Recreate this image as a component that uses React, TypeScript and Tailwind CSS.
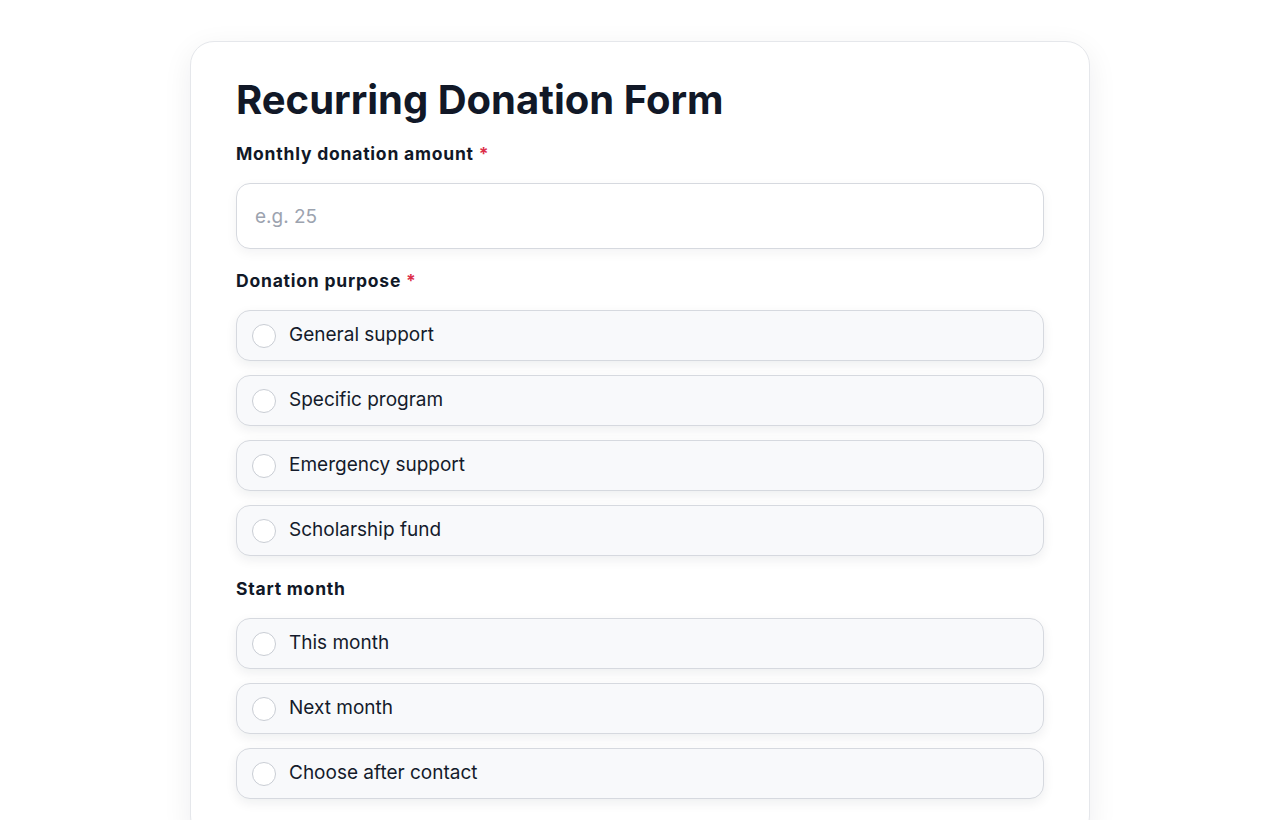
import React, { useState } from 'react';

const purposes = ['General support', 'Specific program', 'Emergency support', 'Scholarship fund'];
const months = ['This month', 'Next month', 'Choose after contact'];

interface OptionListProps {
    name: string;
    options: string[];
    value: string;
    onChange: (v: string) => void;
}

const OptionList: React.FC<OptionListProps> = ({ name, options, value, onChange }) => {
    return (
        <div className="flex flex-col gap-[14px]">
            {options.map((opt) => (
                <label
                    key={opt}
                    className="flex h-[51px] cursor-pointer items-center gap-[13px] rounded-[14px] border border-[#d6d9df] bg-[#f8f9fb] pl-[15px] shadow-[0_4px_12px_rgba(17,24,39,0.07)]"
                >
                    <input
                        type="radio"
                        name={name}
                        checked={value === opt}
                        onChange={() => onChange(opt)}
                        className="sr-only"
                    />
                    <span className="flex h-[24px] w-[24px] shrink-0 items-center justify-center rounded-full border border-[#c9cdd4] bg-white">
                        {value === opt && <span className="h-[12px] w-[12px] rounded-full bg-[#111827]" />}
                    </span>
                    <span className="text-[19px] text-[#141b2b]">{opt}</span>
                </label>
            ))}
        </div>
    );
};

const App: React.FC = () => {
    const [amount, setAmount] = useState('');
    const [purpose, setPurpose] = useState('');
    const [month, setMonth] = useState('');

    const labelClass = 'mb-[17px] text-[17.5px] font-bold leading-[24px] tracking-[0.045em] text-[#111827]';

    return (
        <div className="min-h-screen bg-white pt-[41px] font-['Inter',sans-serif] antialiased">
            <div className="mx-auto w-[900px] rounded-[24px] border border-[#e5e7eb] bg-white px-[45px] pt-[34px] pb-[40px] shadow-[0_8px_30px_rgba(17,24,39,0.07)]">
                <h1 className="mb-[18px] text-[40px] font-bold leading-[48px] text-[#111827]">
                    Recurring Donation Form
                </h1>

                <div className="mb-[20px]">
                    <p className={labelClass}>
                        Monthly donation amount <span className="text-[#dc2f4a]">*</span>
                    </p>
                    <input
                        type="text"
                        value={amount}
                        onChange={(e) => setAmount(e.target.value)}
                        placeholder="e.g. 25"
                        className="block h-[66px] w-full rounded-[14px] border border-[#d6d9df] bg-white px-[18px] text-[19px] text-[#111827] placeholder:text-[#9ca3af] shadow-[0_4px_12px_rgba(17,24,39,0.05)] focus:outline-none"
                    />
                </div>

                <div className="mb-[21px]">
                    <p className={labelClass}>
                        Donation purpose <span className="text-[#dc2f4a]">*</span>
                    </p>
                    <OptionList name="purpose" options={purposes} value={purpose} onChange={setPurpose} />
                </div>

                <div>
                    <p className={labelClass}>Start month</p>
                    <OptionList name="month" options={months} value={month} onChange={setMonth} />
                </div>
            </div>
        </div>
    );
};

export default App;
